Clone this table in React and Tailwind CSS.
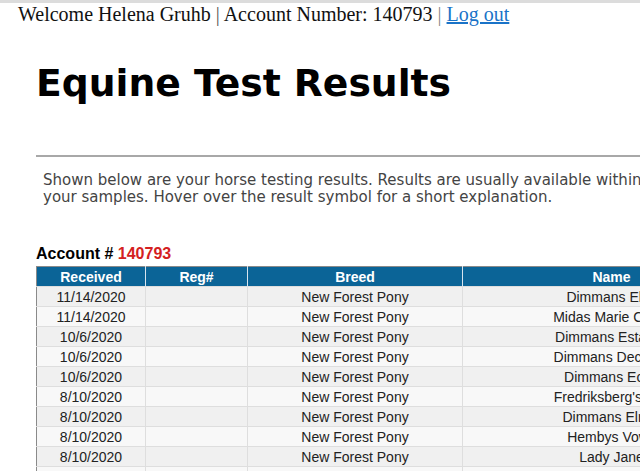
import React from 'react';

const rows = [
    ['11/14/2020', '', 'New Forest Pony', 'Dimmans Elsa'],
    ['11/14/2020', '', 'New Forest Pony', 'Midas Marie Chloe'],
    ['10/6/2020', '', 'New Forest Pony', 'Dimmans Estalina'],
    ['10/6/2020', '', 'New Forest Pony', 'Dimmans Decisive'],
    ['10/6/2020', '', 'New Forest Pony', 'Dimmans Echo'],
    ['8/10/2020', '', 'New Forest Pony', "Fredriksberg's Lea"],
    ['8/10/2020', '', 'New Forest Pony', 'Dimmans Elrika'],
    ['8/10/2020', '', 'New Forest Pony', 'Hembys Vows'],
    ['8/10/2020', '', 'New Forest Pony', 'Lady Jane'],
    ['8/10/2020', '', 'New Forest Pony', 'Dimmans Erika'],
];

export default function App() {
    return (
        <div className="w-[640px] h-[471px] overflow-hidden bg-white">
            <div className="w-[960px]">
                <div className="h-[3px] bg-[#dcdcdc]" />
                <div className="pl-[18px] text-[20px] leading-[22px] text-[#111]" style={{ fontFamily: '"Liberation Serif", serif' }}>
                    Welcome Helena Gruhb <span className="text-[#555]">|</span> Account Number: 140793 <span className="text-[#888]">|</span>{' '}
                    <a href="#" className="text-[#1a73c8] underline">Log out</a>
                </div>

                <div className="pl-[36px]">
                    <h1 className="mt-[34px] text-[37.7px] leading-[48px] font-bold text-black" style={{ fontFamily: '"DejaVu Sans", Verdana, sans-serif' }}>
                        Equine Test Results
                    </h1>
                    <div className="mt-[48px] border-t-2 border-[#a8a8a8]" />
                    <p className="mt-[15px] pl-[7px] text-[15px] leading-[17px] text-[#444] whitespace-nowrap" style={{ fontFamily: '"DejaVu Sans", Verdana, sans-serif' }}>
                        <span className="block">Shown below are your horse testing results. Results are usually available within 3 to 4 weeks of receiving</span>
                        <span className="block">your samples. Hover over the result symbol for a short explanation.</span>
                    </p>

                    <div className="mt-[38px] text-[16px] leading-[20px] font-bold text-black" style={{ fontFamily: '"Liberation Sans", Arial, sans-serif' }}>
                        Account # <span className="text-[#d42020]">140793</span>
                    </div>

                    <table className="mt-[2px] border-collapse border border-[#8a8a8a] text-[14px]" style={{ fontFamily: '"Liberation Sans", Arial, sans-serif' }}>
                        <thead>
                            <tr className="bg-[#0b6497] text-white font-bold h-[20px] leading-[16px]">
                                <th className="w-[109px] border-r border-[#d8e4ee]">Received</th>
                                <th className="w-[102px] border-r border-[#d8e4ee]">Reg#</th>
                                <th className="w-[215px] border-r border-[#d8e4ee]">Breed</th>
                                <th className="w-[298px] border-r border-[#d8e4ee]">Name</th>
                                <th className="w-[150px]">Result</th>
                            </tr>
                        </thead>
                        <tbody>
                            {rows.map((r, i) => (
                                <tr key={i} className={`h-[20px] leading-[16px] text-[#222] border-t border-[#dedede] ${i % 2 === 0 ? 'bg-[#f0f0f0]' : 'bg-[#f8f8f8]'}`}>
                                    <td className="text-center border-r border-[#dedede]">{r[0]}</td>
                                    <td className="text-center border-r border-[#dedede]">{r[1]}</td>
                                    <td className="text-center border-r border-[#dedede]">{r[2]}</td>
                                    <td className="text-center border-r border-[#dedede]">{r[3]}</td>
                                    <td className="text-center"></td>
                                </tr>
                            ))}
                        </tbody>
                    </table>
                </div>
            </div>
        </div>
    );
}
